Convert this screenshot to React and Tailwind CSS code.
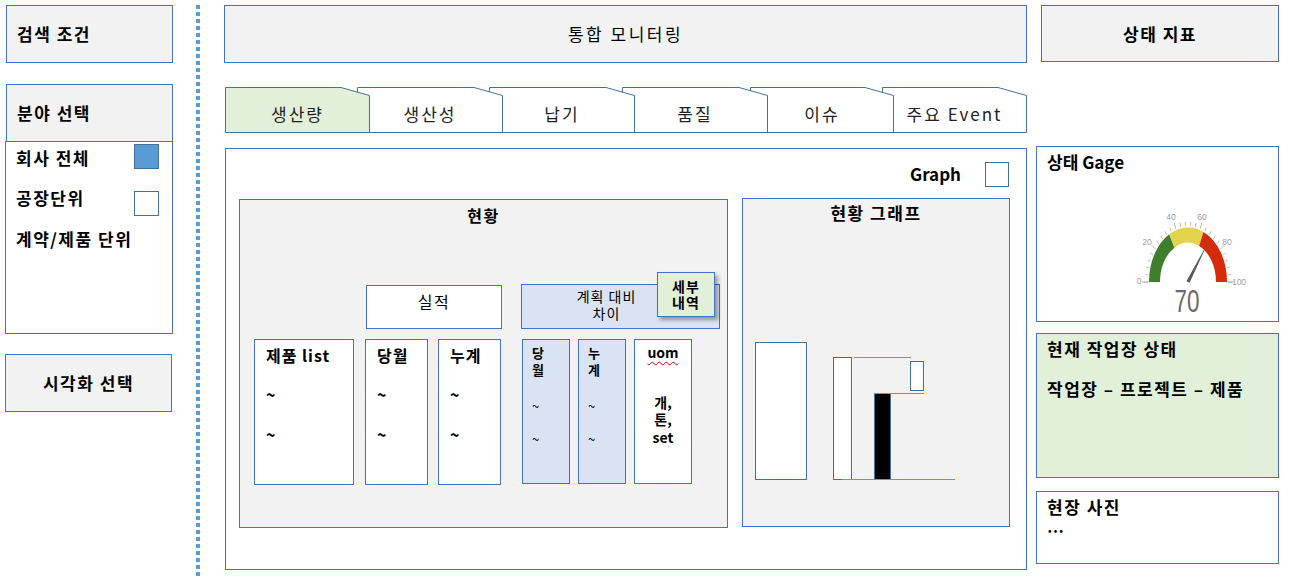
import React from 'react';

const tabs = [
  { label: '생산량', w: 145, cls: 'w-[145px] z-[6]', active: true },
  { label: '생산성', w: 146, cls: 'w-[146px] -ml-[13px] z-[5]' },
  { label: '납기', w: 146, cls: 'w-[146px] -ml-[14px] z-[4]' },
  { label: '품질', w: 146, cls: 'w-[146px] -ml-[13px] z-[3]' },
  { label: '이슈', w: 144, cls: 'w-[144px] -ml-[18px] z-[2]' },
  { label: '주요 Event', w: 145, cls: 'w-[145px] -ml-[12px] z-[1]' },
];

function Tab({ label, w, cls, active }) {
  const pts = `0.5,0.5 ${w - 29},0.5 ${w - 0.5},8.5 ${w - 0.5},45.5 0.5,45.5`;
  return (
    <div className={`relative h-[46px] shrink-0 flex items-center justify-center pt-[8px] ${cls}`}>
      <svg className="absolute inset-0" width={w} height={46}>
        <polygon points={pts} fill={active ? '#e2f0d9' : '#ffffff'} stroke="#41719c" strokeWidth="1" />
      </svg>
      <span className="relative text-[17px] leading-[24px] tracking-[2px] text-[#222]">{label}</span>
    </div>
  );
}

function Gauge() {
  const cx = 60, cy = 82, k = 1.4;
  const pt = (v, r) => {
    const a = Math.PI - (v / 100) * Math.PI;
    return [cx + r * Math.cos(a), cy - k * r * Math.sin(a)];
  };
  const band = (v0, v1, ro, ri) => {
    const [x0, y0] = pt(v0, ro);
    const [x1, y1] = pt(v1, ro);
    const [x2, y2] = pt(v1, ri);
    const [x3, y3] = pt(v0, ri);
    return `M${x0} ${y0} A${ro} ${ro * k} 0 0 1 ${x1} ${y1} L${x2} ${y2} A${ri} ${ri * k} 0 0 0 ${x3} ${y3} Z`;
  };
  const ticks = [];
  for (let v = 0; v <= 100; v += 4) {
    const [a, b] = pt(v, 40);
    const [c, d] = pt(v, v % 20 === 0 ? 44.5 : 43);
    ticks.push(<line key={v} x1={a} y1={b} x2={c} y2={d} stroke="#a6a6a6" strokeWidth="0.8" />);
  }
  const labels = [
    ['0', 11, 82], ['20', 19, 43], ['40', 43, 18], ['60', 74, 18], ['80', 99, 43], ['100', 111, 83],
  ];
  return (
    <svg width="125" height="120" className="block font-normal tracking-normal">
      <path d={band(0, 34, 39, 28)} fill="#3f7f2b" />
      <path d={band(34, 63, 39, 28)} fill="#e3d24c" />
      <path d={band(63, 100, 39, 28)} fill="#d62b0b" />
      {ticks}
      <line x1="14" y1="82" x2="21" y2="82" stroke="#a6a6a6" strokeWidth="0.8" />
      <line x1="99" y1="82" x2="106" y2="82" stroke="#a6a6a6" strokeWidth="0.8" />
      {labels.map(([t, x, y]) => (
        <text key={t} x={x} y={y} fontSize="8.5" fontWeight="400" fill="#a0a0a0" textAnchor="middle" dominantBaseline="middle" fontFamily="Liberation Sans, sans-serif">{t}</text>
      ))}
      <polygon points="58.4,81.2 80.5,41.5 61.6,82.8" fill="#5a5a5a" />
      <text x="59" y="112" fontSize="31" fontWeight="400" fill="#6b6b6b" textAnchor="middle" textLength="25" lengthAdjust="spacingAndGlyphs" fontFamily="Liberation Sans, sans-serif">70</text>
    </svg>
  );
}

function StatusChart() {
  return (
    <svg width="266" height="300" className="block">
      <rect x="12.5" y="117.5" width="51" height="137" fill="#fff" stroke="#41719c" />
      <rect x="90.5" y="132.5" width="18" height="122" fill="#fff" stroke="#41719c" />
      <line x1="111" y1="132.5" x2="168" y2="132.5" stroke="#5b9bd5" />
      <rect x="167.5" y="136.5" width="13" height="29" fill="#fff" stroke="#41719c" />
      <rect x="131.5" y="168.5" width="16" height="86" fill="#000" stroke="#41719c" />
      <line x1="131" y1="168.5" x2="181" y2="168.5" stroke="#5b9bd5" />
      <line x1="99" y1="254.5" x2="212" y2="254.5" stroke="#5b9bd5" />
    </svg>
  );
}

function WhiteCol({ title, cls }) {
  return (
    <div className={`h-[146px] bg-white border border-[#4472c4] pl-[11px] pt-[3px] font-bold text-[16px] leading-[24px] tracking-[1px] ${cls}`}>
      <div>{title}</div>
      <div className="mt-[15px]">~</div>
      <div className="mt-[16px]">~</div>
    </div>
  );
}

function BlueCol({ a, b, cls }) {
  return (
    <div className={`w-[48px] h-[145px] bg-[#dae3f3] border border-[#4472c4] pl-[9px] pt-[4px] text-[13px] leading-[17px] ${cls}`}>
      <div className="font-bold">{a}</div>
      <div className="font-bold">{b}</div>
      <div className="mt-[19px]">~</div>
      <div className="mt-[16px]">~</div>
    </div>
  );
}

export default function App() {
  return (
    <div className="w-[1289px] h-[576px] overflow-hidden bg-white flex pt-[5px] pl-[5px] text-black font-['Noto_Sans_CJK_KR','Noto_Sans',sans-serif]">
      {/* left column */}
      <div className="w-[168px] shrink-0 flex flex-col font-bold text-[17px] tracking-[1.5px]">
        <div className="ml-[1px] w-[167px] h-[58px] bg-[#f2f2f2] border border-[#4472c4] flex items-center pl-[10px]">
          검색 조건
        </div>
        <div className="ml-[1px] mt-[21px] w-[167px] h-[58px] bg-[#f2f2f2] border border-[#4472c4] flex items-center pl-[10px]">
          분야 선택
        </div>
        <div className="-mt-[1px] w-[168px] h-[193px] bg-white border border-[#4472c4] pt-[2px] pl-[10px] pr-[13px] leading-[24px]">
          <div className="flex justify-between items-start">
            <span className="mt-[2px]">회사 전체</span>
            <span className="w-[25px] h-[25px] bg-[#5b9bd5] border border-[#41719c]" />
          </div>
          <div className="flex justify-between items-start mt-[16px]">
            <span>공장단위</span>
            <span className="mt-[5px] w-[25px] h-[25px] bg-white border border-[#41719c]" />
          </div>
          <div className="mt-[11px]">계약/제품 단위</div>
        </div>
        <div className="mt-[20px] w-[167px] h-[58px] bg-[#f2f2f2] border border-[#4472c4] flex items-center justify-center">
          시각화 선택
        </div>
      </div>

      {/* divider */}
      <div className="ml-[23px] w-[4px] shrink-0 bg-[repeating-linear-gradient(to_bottom,#5b9bd5_0px,#5b9bd5_4px,transparent_4px,transparent_7px)]" />

      {/* center column */}
      <div className="ml-[24px] w-[803px] shrink-0 flex flex-col">
        <div className="h-[58px] bg-[#f2f2f2] border border-[#4472c4] flex items-center justify-center text-[17px] tracking-[2.5px]">
          통합 모니터링
        </div>
        <div className="mt-[24px] ml-[1px] flex">
          {tabs.map((t) => (
            <Tab key={t.label} {...t} />
          ))}
        </div>
        <div className="mt-[15px] ml-[1px] w-[802px] h-[422px] bg-white border border-[#4472c4]">
          <div className="flex justify-end items-start pt-[13px] pr-[17px] gap-[24px]">
            <span className="font-bold text-[17px] leading-[24px]">Graph</span>
            <span className="w-[24px] h-[25px] border border-[#41719c] bg-white" />
          </div>
          <div className="flex items-start mt-[11px] pl-[13px]">
            {/* 현황 */}
            <div className="mt-[1px] w-[489px] h-[329px] bg-[#f2f2f2] border border-[#4472c4] flex flex-col">
              <div className="pt-[3px] text-center font-bold text-[16px] leading-[24px] tracking-[1.5px]">현황</div>
              <div className="mt-[57px] pl-[14px] flex items-start">
                <WhiteCol title="제품 list" cls="mt-[55px] w-[100px]" />
                <div className="ml-[11px] flex flex-col">
                  <div className="ml-[1px] mt-[1px] w-[136px] h-[44px] bg-white border border-[#4472c4] pt-[3px] text-center text-[16px] leading-[24px] tracking-[1.5px]">
                    실적
                  </div>
                  <div className="mt-[10px] flex">
                    <WhiteCol title="당월" cls="w-[63px]" />
                    <WhiteCol title="누계" cls="ml-[10px] w-[63px]" />
                  </div>
                </div>
                <div className="ml-[19px] relative flex flex-col">
                  <div className="w-[199px] h-[45px] bg-[#dae3f3] border border-[#4472c4] pt-[3px] pr-[28px] flex justify-center text-[14px] leading-[17px] tracking-[1px]">
                    <span className="text-center">
                      계획 대비
                      <br />
                      차이
                    </span>
                  </div>
                  <div className="absolute left-[136px] -top-[12px] w-[58px] h-[45px] bg-[#e2f0d9] border border-[#4472c4] shadow-[3px_3px_4px_rgba(0,0,0,0.35)] pt-[5px] text-center font-bold text-[14px] leading-[16px] tracking-[1px]">
                    세부
                    <br />
                    내역
                  </div>
                  <div className="mt-[10px] flex">
                    <BlueCol a="당" b="월" cls="ml-[1px]" />
                    <BlueCol a="누" b="계" cls="ml-[8px]" />
                    <div className="ml-[8px] w-[58px] h-[145px] bg-white border border-[#4472c4] pt-[4px] text-center font-bold text-[14px] leading-[17.5px]">
                      <div className="underline decoration-wavy decoration-[#e00000] decoration-1 underline-offset-[3px]">uom</div>
                      <div className="mt-[32px]">개,</div>
                      <div>톤,</div>
                      <div>set</div>
                    </div>
                  </div>
                </div>
              </div>
            </div>
            {/* 현황 그래프 */}
            <div className="ml-[14px] w-[268px] h-[329px] bg-[#f2f2f2] border border-[#4472c4] flex flex-col">
              <div className="pt-[2px] text-center font-bold text-[17px] leading-[24px] tracking-[1.5px]">현황 그래프</div>
              <StatusChart />
            </div>
          </div>
        </div>
      </div>

      {/* right column */}
      <div className="ml-[9px] w-[243px] shrink-0 flex flex-col font-bold text-[17px] leading-[24px]">
        <div className="ml-[5px] w-[238px] h-[57px] bg-[#f2f2f2] border border-[#4472c4] flex items-center justify-center tracking-[1.5px]">
          상태 지표
        </div>
        <div className="mt-[84px] h-[176px] bg-white border border-[#4472c4] flex flex-col">
          <div className="pt-[3px] pl-[10px]">상태 Gage</div>
          <div className="mt-[26px] ml-[91px]">
            <Gauge />
          </div>
        </div>
        <div className="mt-[11px] h-[145px] bg-[#e2f0d9] border border-[#4472c4] pt-[3px] pl-[10px] tracking-[1.5px]">
          <div>현재 작업장 상태</div>
          <div className="mt-[16px]">작업장 – 프로젝트 – 제품</div>
        </div>
        <div className="mt-[13px] h-[73px] bg-white border border-[#4472c4] pt-[3px] pl-[10px] tracking-[1.5px]">
          <div>현장 사진</div>
          <div>…</div>
        </div>
      </div>
    </div>
  );
}
